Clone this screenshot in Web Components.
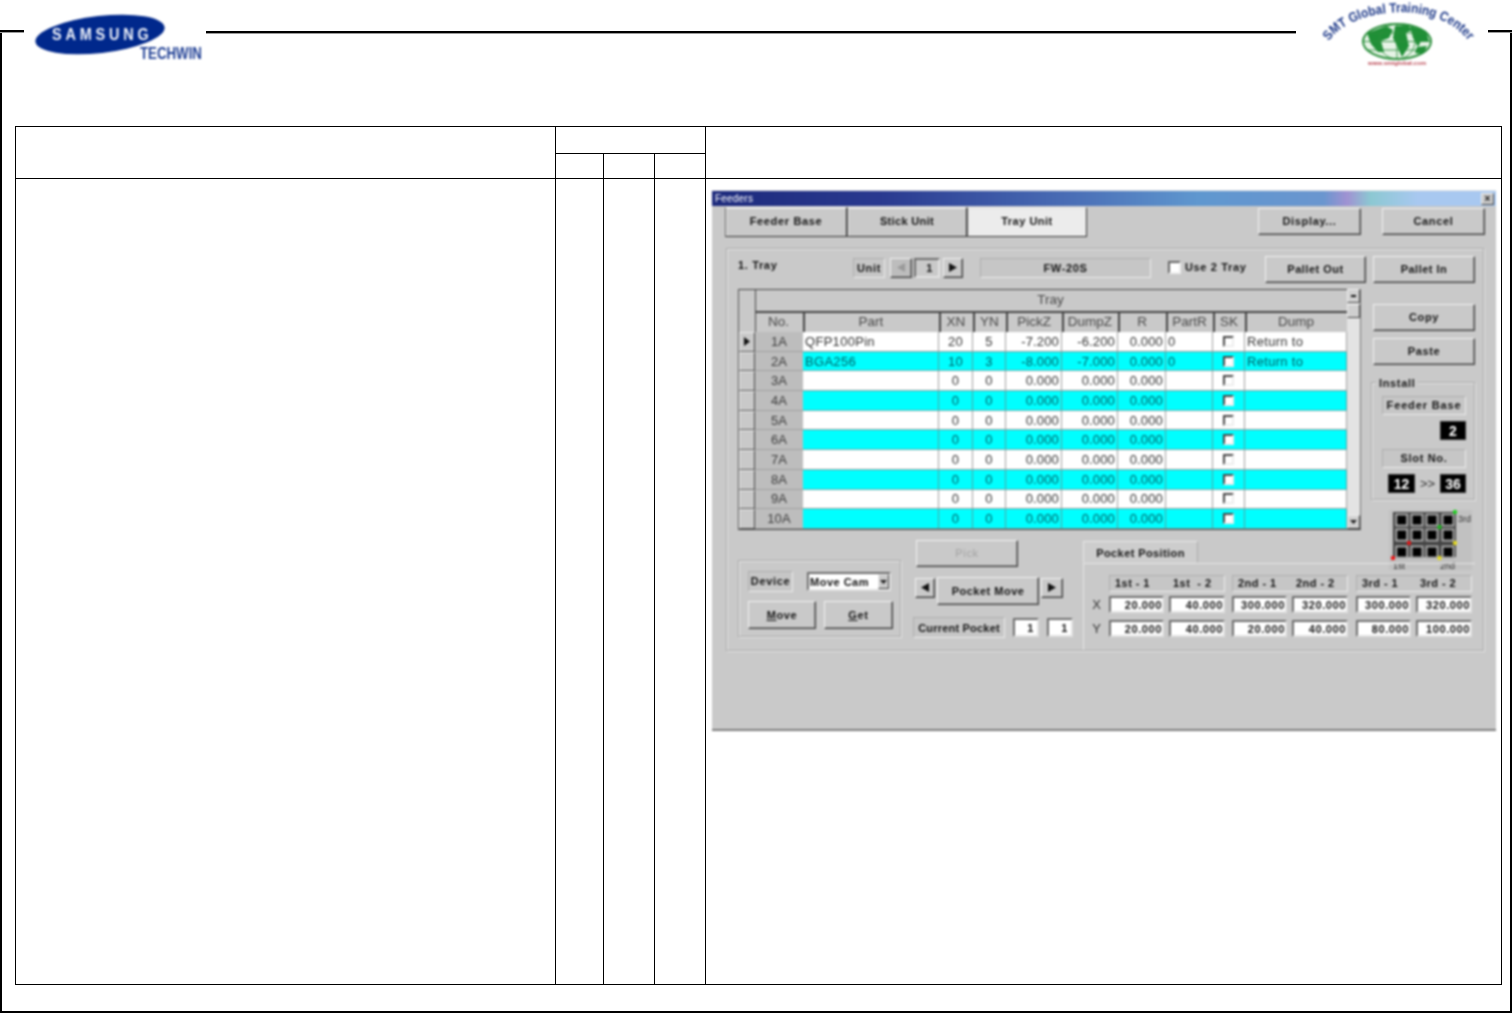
<!DOCTYPE html>
<html lang="en"><head><meta charset="utf-8"><title>Feeders</title>
<style>
html,body{margin:0;padding:0;background:#fff;width:1512px;height:1014px;overflow:hidden;font-family:"Liberation Sans",Arial,sans-serif}
</style></head><body>
<x-page></x-page>
<script>
const font='font-family:"Liberation Sans",Arial,sans-serif;';
function def(name,css,html,init){
  customElements.define(name,class extends HTMLElement{
    constructor(){super();const r=this.attachShadow({mode:'open'});r.innerHTML='<style>'+css+'</style>'+html;if(init)init(r,this);}
  });
}
const ctl=':host{box-sizing:border-box;display:flex;align-items:center;justify-content:center;flex:none;'+font+'font-weight:700;font-size:11px;letter-spacing:.65px;color:#151515;white-space:nowrap;';

def('x-btn',ctl+'padding-bottom:1px;background:#c9c9c9;border:1px solid;border-color:#f2f2f2 #3c3c3c #3c3c3c #f2f2f2;box-shadow:inset -1px -1px 0 #8c8c8c}','<slot></slot>');
def('x-tab',ctl+'padding-bottom:3px;background:#c9c9c9;border:1px solid;border-color:#eee #333 #333 #666;box-shadow:inset 1px 1px 0 #e4e4e4}:host([active]){background:#ececec}','<slot></slot>');
def('x-label',ctl+'padding-bottom:1px;background:#c6c6c6;border:1px solid;border-color:#adadad #ececec #ececec #adadad}','<slot></slot>');
def('x-field',ctl+'justify-content:flex-end;padding-right:0;background:#fff;border:2px solid;border-color:#6e6e6e #e2e2e2 #e2e2e2 #6e6e6e;letter-spacing:.6px}','<slot></slot>');
def('x-lcd',ctl+'background:#000;color:#fff;font-size:14px;letter-spacing:0;border:1px solid #333;width:26px;height:19px}','<slot></slot>');
def('x-group',':host{box-sizing:border-box;display:block;flex:none;border:1px solid #a9a9a9;box-shadow:1px 1px 0 #e6e6e6,inset 1px 1px 0 #e6e6e6}','<slot></slot>');
def('x-tri',':host{display:block;line-height:0}svg{display:block}','<svg width="8" height="9" viewBox="0 0 8 9"><polygon points="0,0 8,4.5 0,9" fill="#111"/></svg>',(r,h)=>{
  const p=r.querySelector('polygon');
  if(h.getAttribute('dir')==='l')p.setAttribute('points','8,0 0,4.5 8,9');
  if(h.getAttribute('color'))p.setAttribute('fill',h.getAttribute('color'));
});

def('x-samsung-logo',':host{display:block;width:182px;height:64px;flex:none;margin-top:-30px;filter:blur(.8px)}svg{display:block}',
`<svg width="182" height="64" viewBox="0 0 182 64">
<ellipse cx="76" cy="34.5" rx="65" ry="18.5" transform="rotate(-6.5 76 34.5)" fill="#00288c"/>
<text transform="translate(28 40) scale(.85 1)" font-family="Liberation Sans" font-weight="700" font-size="17" letter-spacing="4.5" fill="#eef2fa">SAMSUNG</text>
<text transform="translate(116 59) scale(.83 1)" font-family="Liberation Sans" font-weight="700" font-size="16" fill="#1f3f94">TECHWIN</text>
</svg>`);

def('x-smt-logo',':host{display:block;width:192px;height:70px;flex:none;margin-top:-30px;filter:blur(.8px)}svg{display:block}',
`<svg width="192" height="70" viewBox="0 0 192 70">
<defs><path id="arc" d="M33 41 C54 9 138 -3 172 40"/></defs>
<text font-family="Liberation Sans" font-weight="700" font-size="13.5" fill="#1c3888"><textPath href="#arc" textLength="156" lengthAdjust="spacingAndGlyphs">SMT Global Training Center</textPath></text>
<ellipse cx="101" cy="41.5" rx="34" ry="17.5" fill="#e6f3e6" stroke="#2b8f3c" stroke-width="2"/>
<g fill="#1f8f36">
<path d="M71 33 L90 26 L97 30 L93 38 L85 41 L88 52 L82 52 L75 44 Z"/>
<path d="M99 26 L112 25 L116 30 L110 33 L113 46 L106 57 L101 46 L97 38 Z"/>
<path d="M114 26 L130 31 L133 41 L125 41 L122 47 L117 38 Z"/>
<path d="M121 47 L131 46 L127 54 L119 53 Z"/>
</g>
<g fill="none" stroke="#2b8f3c" stroke-width=".9">
<ellipse cx="101" cy="41.5" rx="18" ry="17.5"/><path d="M101 24V59M67 41.5H135M71 33H131M71 50H131"/>
</g>
<text x="72" y="65" font-family="Liberation Sans" font-size="5" font-weight="700" fill="#b8434f" textLength="58" lengthAdjust="spacingAndGlyphs">www.smtglobal.com</text>
</svg>`);

def('x-minimap',':host{display:block;flex:none;line-height:0}svg{display:block}',
`<svg width="86" height="62" viewBox="0 0 86 62"></svg>`,(r)=>{
  const xs=[13.7,29,44,60], ys=[12,27,44];
  let s='<rect x="1" y="2" width="83" height="60" fill="#c1c1c1"/><rect x="5" y="4" width="63" height="45" fill="#444"/>';
  ys.forEach(y=>xs.forEach(x=>{
    s+=`<rect x="${x-6.5}" y="${y-6.5}" width="13" height="13" fill="#a8a8a8"/><rect x="${x-4.5}" y="${y-4.5}" width="9" height="9" fill="#000"/>`;
  }));
  [[67,4,'#22d022'],[51.5,19,'#1fb51f'],[21,35,'#e01818'],[5,50,'#ee1414'],[67,35,'#e2d820'],[51.5,50,'#e2d820']].forEach(d=>{
    s+=`<circle cx="${d[0]}" cy="${d[1]}" r="2.2" fill="${d[2]}"/>`;
  });
  s+='<g font-family="Liberation Sans" font-size="9" fill="#333"><text x="70" y="14">3rd</text><text x="5" y="61">1st</text><text x="52" y="61">2nd</text></g>';
  r.querySelector('svg').innerHTML=s;
});

const rows=[
 ['1A','QFP100Pin','20','5','-7.200','-6.200','0.000','0','Return to'],
 ['2A','BGA256','10','3','-8.000','-7.000','0.000','0','Return to'],
 ...[3,4,5,6,7,8,9,10].map(n=>[n+'A','','0','0','0.000','0.000','0.000','',''])
];
def('x-datagrid',`:host{display:grid;flex:none;box-sizing:border-box;width:623px;height:241px;grid-template-columns:16px 48px 136px 34px 33px 56px 56px 48px 47px 32px 102px 14px;grid-template-rows:22px 21px repeat(10,19.7px);${font}font-size:13px;color:#333;background:#c9c9c9;border-bottom:2px solid #444;border-left:1px solid #555;white-space:nowrap}
.h{display:flex;align-items:center;justify-content:center;box-sizing:border-box;padding:0 2px 2px 0;border-top:1px solid #444;border-left:1px solid #444;background:#c9c9c9;color:#484848;font-size:13.5px}
.c{display:flex;align-items:center;box-sizing:border-box;padding:0 2px;border-right:1px solid #a0a0a0;border-bottom:1px solid #999;overflow:hidden;letter-spacing:.3px}
.w{background:#fff}.y{background:#0ff;color:#005d63;border-right-color:#4fa5a5;border-bottom-color:#70acac}
.r{justify-content:flex-end;letter-spacing:.15px}.m{justify-content:center}
.rh{box-sizing:border-box;background:#c9c9c9;border:1px solid;border-color:#eee #444 #555 #eee;display:flex;align-items:center;justify-content:center}
.no{display:flex;align-items:center;justify-content:center;background:#bdbdbd;color:#3c3c3c;border-bottom:1px solid #a0a0a0;letter-spacing:.15px}
.ck{box-sizing:border-box;display:block;width:11px;height:11px;background:#fff;border:2px solid;border-color:#444 #eee #eee #444}
.sb{grid-column:12;grid-row:1/-1;display:flex;flex-direction:column;background:#e3e3e3;box-sizing:border-box;border-right:1px solid #777}
.sb b{box-sizing:border-box;flex:none;display:flex;align-items:center;justify-content:center;height:14px;background:#d0d0d0;border:1px solid;border-color:#eee #444 #444 #eee}
.sb b.t{margin-top:1px;height:14px;background:#cfcfcf}.sb i{flex:1}
svg{display:block}`,
'<div class="h" style="grid-column:1;grid-row:1/3;border-left:0"></div><div class="h" style="grid-column:2/12;grid-row:1">Tray</div><div class="sb"><b><svg width="5" height="3"><rect width="5" height="2" fill="#111"/></svg></b><b class="t"></b><i></i><b><svg width="7" height="4"><polygon points="0,0 7,0 3.5,4" fill="#222"/></svg></b></div>',
(r)=>{
  let s='';
  ['No.','Part','XN','YN','PickZ','DumpZ','R','PartR','SK','Dump'].forEach((t,i)=>{
    s+=`<div class="h" style="grid-column:${i+2};grid-row:2;border-left-width:${i?2:1}px;border-top-width:2px">${t}</div>`;
  });
  rows.forEach((d,i)=>{
    const k=i%2?'y':'w',row=i+3,cell=(col,cls,html)=>`<div class="c ${k} ${cls}" style="grid-column:${col};grid-row:${row}">${html}</div>`;
    s+=`<div class="rh" style="grid-column:1;grid-row:${row}">${i===0?'<svg width="6" height="9"><polygon points="0,0 6,4.5 0,9" fill="#111"/></svg>':''}</div>`;
    s+=`<div class="no" style="grid-column:2;grid-row:${row}">${d[0]}</div>`;
    s+=cell(3,'',d[1])+cell(4,'m',d[2])+cell(5,'m',d[3])+cell(6,'r',d[4])+cell(7,'r',d[5])+cell(8,'r',d[6])+cell(9,'',d[7])+cell(10,'m','<span class="ck"></span>')+cell(11,'',d[8]);
  });
  r.innerHTML+=s;
});

def('x-pocket',`:host{display:block;flex:none;width:392px;padding-top:1px;${font}}
.tab{box-sizing:border-box;width:115px;height:22px;padding-top:1px;display:flex;align-items:center;justify-content:center;font-weight:700;font-size:11px;letter-spacing:.4px;color:#151515;border:1px solid;border-color:#e8e8e8 #aaa transparent #e8e8e8;background:#cdcdcd}
.body{box-sizing:border-box;height:87px;border-top:1px solid #e6e6e6;border-left:1px solid #e6e6e6;padding-top:11px;display:grid;grid-template-columns:25px 55px 5px 56px 7px 55px 5px 56px 8px 55px 5px 56px;grid-template-rows:17px 4px 17px 7px 17px}
.axis{display:flex;align-items:center;justify-content:center;font-size:13px;color:#333;grid-column:1}
x-label{justify-content:flex-start;padding-left:5px;letter-spacing:.45px}
x-label span{white-space:pre;display:block;width:58px;flex:none}
x-field{min-width:0}`,
`<div class="tab">Pocket Position</div><div class="body"></div>`,(r)=>{
  const vals=[['20.000','40.000','300.000','320.000','300.000','320.000'],['20.000','40.000','20.000','40.000','80.000','100.000']];
  const cols=[2,4,6,8,10,12];
  let s='';
  [['1st - 1','1st  - 2'],['2nd - 1','2nd - 2'],['3rd - 1','3rd - 2']].forEach((p,i)=>{
    const c=2+i*4;
    s+=`<x-label style="grid-column:${c}/${c+3};grid-row:1"><span>${p[0]}</span><span>${p[1]}</span></x-label>`;
  });
  ['X','Y'].forEach((a,j)=>{
    const row=3+j*2;
    s+=`<div class="axis" style="grid-row:${row}">${a}</div>`;
    vals[j].forEach((v,i)=>{s+=`<x-field style="grid-column:${cols[i]};grid-row:${row}">${v}</x-field>`;});
  });
  r.querySelector('.body').innerHTML=s;
});

def('x-dialog',`:host{box-sizing:border-box;display:flex;flex-direction:column;width:784px;height:541px;background:#c9c9c9;border-top:1px solid #e4e4e4;border-bottom:2px solid #7d7d7d;filter:blur(.8px);${font}font-size:11px;color:#151515}
.title{flex:none;height:15px;display:flex;align-items:center;justify-content:space-between;padding:0 2px 0 3px;background:linear-gradient(90deg,#1d2a7c 0,#2a3a90 22%,#4a6eb6 46%,#5f97cf 62%,#6a96cf 78%,#a092d2 81%,#8cc8d2 84%,#a8c8f0 90%,#a8c8f0 100%);color:#fff;font-size:10px;letter-spacing:.2px}
.x{box-sizing:border-box;width:13px;height:12px;background:#c9c9c9;border:1px solid;border-color:#eee #444 #444 #eee;color:#111;font-size:10px;line-height:9px;text-align:center;font-weight:700;letter-spacing:0}
.top{flex:none;display:flex;align-items:flex-start;height:30px;margin-top:1px;padding:0 11px 0 13px}
.top x-tab{height:30px}.top x-btn{width:103px;height:27px;margin-top:1px}
.panel{margin:11px 12px 0 14px;height:403px;padding-left:11px}
.r1{display:flex;align-items:flex-start;height:27px;margin-top:7px;white-space:nowrap;font-weight:700;letter-spacing:.65px}
.r1 .ti{width:115px;flex:none;margin-top:3px}
.mid{display:flex;height:241px;margin-top:6px}
.side{flex:none;width:104px;margin-left:10px;display:flex;flex-direction:column;padding-top:15px}
.side>x-btn{width:102px;height:27px;margin:0 0 7px 2px}
.inst{margin-top:10px;height:118px;width:104px;display:flex;flex-direction:column;padding-left:10px}
.leg{align-self:flex-start;margin:-6px 0 0 -6px;padding:0 3px;height:13px;line-height:13px;background:#c9c9c9;font-weight:700;letter-spacing:.65px}
.inst x-label{width:84px;height:19px}
.ln{display:flex;width:84px;align-items:center}
.mm{margin:8px 0 0 17px}
.bot{display:flex;align-items:flex-start;margin-top:10px;height:110px}
.dev{width:163px;height:77px;margin-top:20px;padding:10px 0 0 9px}
.dr{display:flex;align-items:flex-start}
.combo{box-sizing:border-box;width:84px;height:19px;margin:1px 0 0 14px;background:#fff;border:2px solid;border-color:#6e6e6e #e2e2e2 #e2e2e2 #6e6e6e;display:flex;align-items:center;justify-content:space-between;font-weight:700;letter-spacing:.5px;color:#111;white-space:nowrap;padding-left:1px}
.combo b{box-sizing:border-box;width:11px;height:15px;background:#c9c9c9;border:1px solid;border-color:#eee #444 #444 #eee;display:flex;align-items:center;justify-content:center}
.mid2{width:160px;margin-left:12px;flex:none}
.mv{display:flex;align-items:flex-start;margin-top:10px;padding-left:2px}
.cp{display:flex;margin-top:12px}
svg{display:block}`,
`<div class="title"><span>Feeders</span><span class="x">×</span></div>
<div class="top">
  <x-tab style="width:122px">Feeder Base</x-tab><x-tab style="width:120px;letter-spacing:.35px">Stick Unit</x-tab><x-tab active style="width:120px;letter-spacing:.5px">Tray Unit</x-tab>
  <x-btn style="margin-left:auto">Display...</x-btn><x-btn style="margin-left:21px">Cancel</x-btn>
</div>
<x-group class="panel">
  <div class="r1">
    <span class="ti">1. Tray</span>
    <x-label style="width:32px;height:20px;margin-top:2px">Unit</x-label>
    <x-btn style="width:22px;height:20px;margin:2px 0 0 5px;background:#bdbdbd"><x-tri dir="l" color="#9a9a9a"></x-tri></x-btn>
    <x-field style="width:26px;height:20px;margin:2px 0 0 2px;background:#c9c9c9;padding-right:5px">1</x-field>
    <x-btn style="width:20px;height:20px;margin:2px 0 0 3px"><x-tri></x-tri></x-btn>
    <x-label style="width:171px;height:20px;margin:2px 0 0 17px">FW-20S</x-label>
    <span style="box-sizing:border-box;flex:none;width:13px;height:13px;margin:5px 0 0 17px;background:#fff;border:2px solid;border-color:#666 #eee #eee #666"></span>
    <span style="width:61px;flex:none;margin:5px 0 0 4px">Use 2 Tray</span>
    <x-btn style="width:101px;height:27px;margin-left:19px;letter-spacing:.5px">Pallet Out</x-btn>
    <x-btn style="width:102px;height:27px;margin-left:7px;letter-spacing:.5px">Pallet In</x-btn>
  </div>
  <div class="mid">
    <x-datagrid></x-datagrid>
    <div class="side">
      <x-btn>Copy</x-btn><x-btn>Paste</x-btn>
      <x-group class="inst">
        <div class="leg">Install</div>
        <x-label style="margin-top:6px;letter-spacing:.85px">Feeder Base</x-label>
        <div class="ln" style="justify-content:flex-end;margin-top:6px"><x-lcd>2</x-lcd></div>
        <x-label style="margin-top:9px">Slot No.</x-label>
        <div class="ln" style="margin-top:6px;padding-left:6px;box-sizing:border-box"><x-lcd style="width:27px">12</x-lcd><span style="flex:1;text-align:center;font-size:13px;color:#333">&gt;&gt;</span><x-lcd>36</x-lcd></div>
      </x-group>
      <x-minimap class="mm"></x-minimap>
    </div>
  </div>
  <div class="bot">
    <x-group class="dev">
      <div class="dr"><x-label style="width:45px;height:21px">Device</x-label>
        <div class="combo"><span>Move Cam</span><b><svg width="7" height="4"><polygon points="0,0 7,0 3.5,4" fill="#222"/></svg></b></div></div>
      <div class="dr" style="margin-top:9px"><x-btn style="width:68px;height:28px"><span><u>M</u>ove</span></x-btn><x-btn style="width:69px;height:28px;margin-left:8px"><span><u>G</u>et</span></x-btn></div>
    </x-group>
    <div class="mid2">
      <x-btn style="width:102px;height:27px;margin-left:3px;color:#a2a2a2;font-weight:400">Pick</x-btn>
      <div class="mv">
        <x-btn style="width:20px;height:20px;margin-top:1px"><x-tri dir="l"></x-tri></x-btn>
        <x-btn style="width:102px;height:28px;margin-left:2px;letter-spacing:.5px">Pocket Move</x-btn>
        <x-btn style="width:22px;height:20px;margin:1px 0 0 2px"><x-tri></x-tri></x-btn>
      </div>
      <div class="cp">
        <x-label style="width:92px;height:21px;letter-spacing:.2px;padding-bottom:0">Current Pocket</x-label>
        <x-field style="width:26px;height:19px;margin:1px 0 0 8px;padding-right:3px">1</x-field>
        <x-field style="width:26px;height:19px;margin:1px 0 0 8px;padding-right:3px">1</x-field>
      </div>
    </div>
    <x-pocket style="margin-left:10px"></x-pocket>
  </div>
</x-group>`);

def('x-doc-table',`:host{display:grid;box-sizing:border-box;width:1487px;height:859px;margin-left:15px;padding:1px;gap:1px;background:#000;grid-template-columns:539px 47px 50px 50px 795px;grid-template-rows:26px 24px 805px}
div{background:#fff}
.shot{padding:11px 0 0 6px}`,
`<div style="grid-row:1/3"></div><div style="grid-column:2/5"></div><div style="grid-column:5;grid-row:1/3"></div>
<div style="grid-column:2;grid-row:2"></div><div style="grid-column:3;grid-row:2"></div><div style="grid-column:4;grid-row:2"></div>
<div style="grid-column:1;grid-row:3"></div><div style="grid-column:2;grid-row:3"></div><div style="grid-column:3;grid-row:3"></div><div style="grid-column:4;grid-row:3"></div>
<div class="shot" style="grid-column:5;grid-row:3"><x-dialog></x-dialog></div>`);

def('x-page',`:host{display:block;width:1512px;height:1014px;box-sizing:border-box;padding-top:30px}
.frame{box-sizing:border-box;height:983px;border-left:2px solid #000;border-right:2px solid #000;border-bottom:2px solid #000}
.hd{display:flex;align-items:flex-start;height:96px;margin-left:-2px;margin-right:-2px}
.seg{flex:none;height:2px;background:#000;border-bottom:1px solid #9a9a9a}
.tb{margin-left:-2px;margin-right:-2px}`,
`<div class="frame">
  <div class="hd"><div class="seg" style="width:24px"></div><x-samsung-logo></x-samsung-logo><div class="seg" style="flex:1;margin-top:1px"></div><x-smt-logo></x-smt-logo><div class="seg" style="width:24px"></div></div>
  <div class="tb"><x-doc-table></x-doc-table></div>
</div>`);
</script>
</body></html>
